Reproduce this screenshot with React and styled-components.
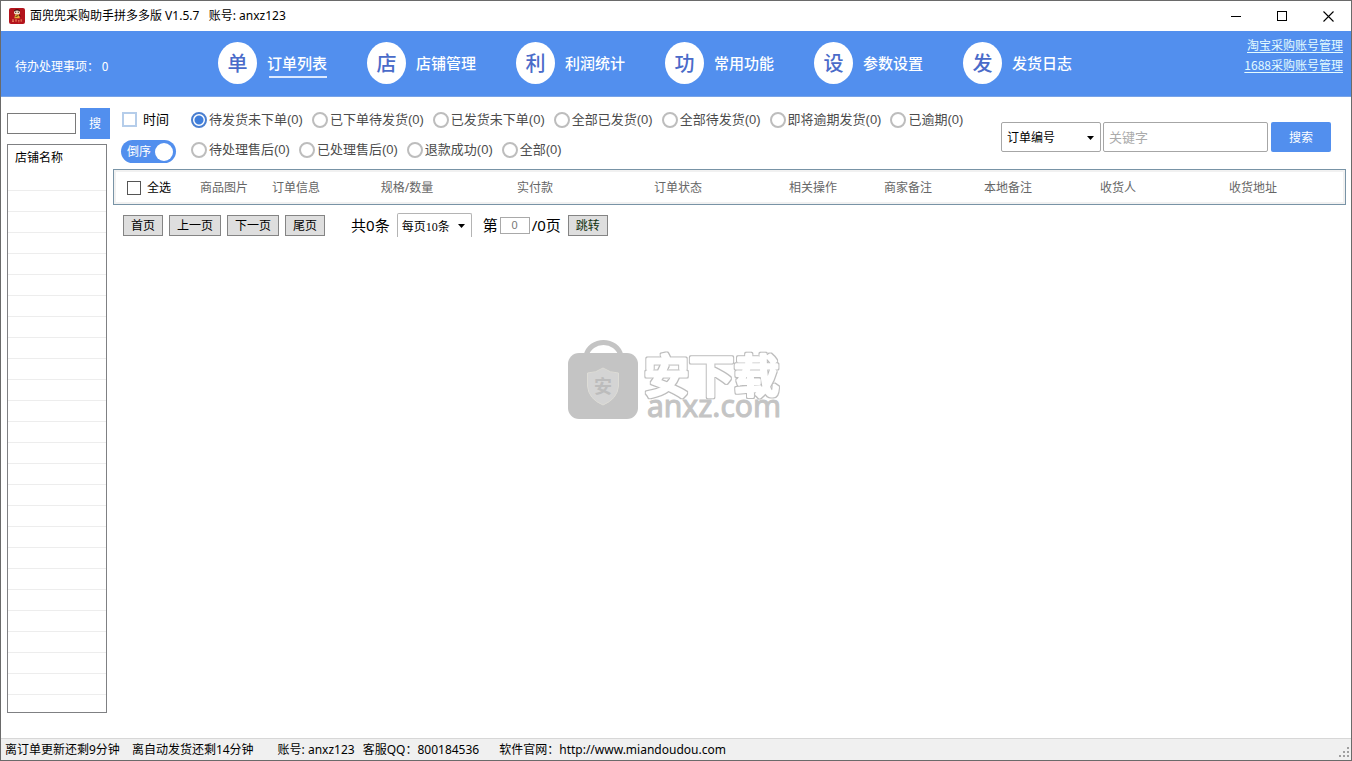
import React, { useState } from "react";
import styled, { createGlobalStyle } from "styled-components";

const blue = "#528fee";

const GlobalStyle = createGlobalStyle`
  * { box-sizing: border-box; }
  body {
    margin: 0;
    background: #fff;
    color: #000;
    font: 12px/16px "Noto Sans", "Noto Sans CJK SC", sans-serif;
  }
  button, input, select { font: inherit; color: inherit; margin: 0; }
`;

const Window = styled.div`
  position: relative;
  display: flex;
  flex-direction: column;
  min-height: 100vh;
  border: 1px solid #6a6a6a;
`;

const TitleBar = styled.header`
  display: flex;
  align-items: center;
  height: 30px;
  padding-left: 8px;
`;

const TitleText = styled.h1`
  margin: 0 auto 0 5px;
  font-size: 12px;
  font-weight: 400;
  white-space: pre;
`;

const WindowButton = styled.button`
  display: flex;
  align-items: center;
  justify-content: center;
  width: 46px;
  height: 30px;
  padding: 0;
  border: 0;
  background: none;
`;

const Banner = styled.div`
  display: flex;
  height: 66px;
  padding: 0 8px 0 14px;
  background: ${blue};
  border-bottom: 1px solid #78a4e8;
  color: #fff;
`;

const Todo = styled.div`
  width: 203px;
  padding-top: 27px;
  font-family: "Noto Sans CJK SC", sans-serif;
`;

const Nav = styled.nav`
  display: flex;
  gap: 40px;
  flex: 1;
  padding-top: 11px;
`;

const NavItem = styled.a`
  display: flex;
  align-items: center;
  gap: 10px;
  height: 42px;
  color: #fff;
  text-decoration: none;
  font: 500 15px/22px "Noto Sans CJK SC", sans-serif;
`;

const NavBadge = styled.span`
  width: 39px;
  height: 42px;
  border-radius: 50%;
  background: #fff;
  color: #4a6bc9;
  font-size: 20px;
  line-height: 42px;
  text-align: center;
`;

const NavLabel = styled.span`
  position: relative;
  white-space: nowrap;
  &::after {
    content: "";
    display: ${(p) => (p.$active ? "block" : "none")};
    position: absolute;
    left: 2px;
    right: 0;
    bottom: -4px;
    height: 2px;
    background: #dce9ff;
  }
`;

const AccountLinks = styled.div`
  display: flex;
  flex-direction: column;
  align-items: flex-end;
  padding-top: 4px;
  a {
    color: #e4fbff;
    font: 12px/20px "Noto Sans CJK SC", sans-serif;
    text-decoration: underline;
    text-underline-offset: 2px;
    white-space: nowrap;
  }
`;

const Body = styled.main`
  display: flex;
  flex: 1;
`;

const Sidebar = styled.aside`
  display: flex;
  flex-direction: column;
  flex: none;
  width: 106px;
  padding: 11px 0 25px 6px;
`;

const ShopSearch = styled.form`
  display: flex;
  align-items: center;
  gap: 4px;
  height: 31px;
  margin-right: -3px;
`;

const ShopInput = styled.input`
  width: 69px;
  height: 21px;
  border: 1px solid #7a7a7a;
`;

const ShopButton = styled.button`
  width: 30px;
  height: 31px;
  padding: 0;
  border: 0;
  background: ${blue};
  color: #fff;
`;

const ShopList = styled.div`
  flex: 1;
  margin-top: 5px;
  padding-bottom: 17px;
  border: 1px solid #7f8083;
`;

const ShopTable = styled.table`
  width: 100%;
  border-collapse: collapse;
  th {
    height: 45px;
    padding: 5px 0 0 7px;
    border-bottom: 1px solid #ededed;
    font-weight: 400;
    text-align: left;
    vertical-align: top;
  }
  td {
    height: 21px;
    padding: 0;
    border-bottom: 1px solid #ededed;
  }
`;

const Content = styled.section`
  flex: 1;
  min-width: 0;
  padding: 8px 5px 0 6px;
`;

const Toolbar = styled.div`
  display: flex;
  height: 64px;
  padding-left: 8px;
`;

const Switches = styled.div`
  display: flex;
  flex-direction: column;
  gap: 11px;
  width: 70px;
  padding-top: 4px;
`;

const TimeLabel = styled.label`
  display: flex;
  align-items: center;
  gap: 6px;
  height: 20px;
  padding-left: 1px;
  font-size: 13px;
`;

const Check = styled.input`
  appearance: none;
  width: ${(p) => p.$size}px;
  height: ${(p) => p.$size}px;
  border: ${(p) => p.$line};
  background: #fff;
  &:checked { background: ${blue}; }
`;

const Toggle = styled.label`
  display: flex;
  align-items: center;
  justify-content: space-between;
  width: 55px;
  height: 23px;
  padding: 0 3px 0 6px;
  border-radius: 12px;
  background: ${blue};
  color: #fff;
  input {
    appearance: none;
    width: 18px;
    height: 18px;
    border-radius: 50%;
    background: #fff;
  }
`;

const Filters = styled.div`
  display: flex;
  flex-direction: column;
  gap: 10px;
  flex: 1;
  padding-top: 5px;
`;

const FilterRow = styled.div`
  display: flex;
  gap: 9px;
`;

const FilterLabel = styled.label`
  display: flex;
  align-items: center;
  gap: 2px;
  height: 20px;
  color: #4c4c4c;
  font: 13px/20px "Liberation Sans", "Noto Sans CJK SC", sans-serif;
  white-space: nowrap;
`;

const Radio = styled.input`
  appearance: none;
  width: 16px;
  height: 16px;
  border: 2px solid #bdbdbd;
  border-radius: 50%;
  &:checked {
    border-color: #4a7fd0;
    background: radial-gradient(circle, #3f7edb 4px, #fff 5px);
  }
`;

const SearchForm = styled.form`
  display: flex;
  align-items: flex-start;
  padding: 17px 15px 0 0;
`;

const SelectWrap = styled.span`
  position: relative;
  display: inline-flex;
  margin-right: 2px;
  svg {
    position: absolute;
    top: 50%;
    right: 7px;
    margin-top: -1px;
    pointer-events: none;
  }
`;

const FieldSelect = styled.select`
  appearance: none;
  width: 100px;
  height: 30px;
  padding: 2px 5px 0;
  border: 1px solid #a6a6a6;
  border-radius: 2px;
  background: #fff;
`;

const KeywordInput = styled.input`
  width: 165px;
  height: 30px;
  margin-right: 3px;
  padding: 0 5px;
  border: 1px solid #a6a6a6;
  border-radius: 2px;
  font-size: 13px;
  &::placeholder { color: #ababab; }
`;

const SearchButton = styled.button`
  width: 60px;
  height: 30px;
  padding: 2px 0 0;
  border: 0;
  border-radius: 2px;
  background: ${blue};
  color: #fff;
`;

const OrderPanel = styled.div`
  padding: 0 17px 0 0;
  border: 1px solid #7893a6;
  box-shadow: inset 0 0 0 2px #f1f1f1;
`;

const OrderTable = styled.table`
  width: 100%;
  table-layout: fixed;
  border-collapse: collapse;
  th {
    height: 34px;
    padding: 2px 0 0;
    color: #666;
    font-weight: 400;
  }
`;

const SelectAll = styled.label`
  display: flex;
  align-items: center;
  gap: 6px;
  padding-left: 13px;
  color: #000;
`;

const Pager = styled.div`
  display: flex;
  align-items: center;
  height: 24px;
  margin-top: 8px;
  padding-left: 10px;
`;

const PagerButton = styled.button`
  height: 21px;
  margin-right: 6px;
  padding: 1px 7px 0;
  border: 1px solid #848484;
  background: #dedede;
  color: ${(p) => (p.$green ? "#12320f" : "#000")};
  line-height: 18px;
`;

const PagerText = styled.span`
  font-size: 15px;
  line-height: 20px;
  white-space: nowrap;
`;

const TotalText = styled(PagerText)`
  margin: 0 7px 0 20px;
`;

const PageJump = styled.label`
  display: flex;
  align-items: center;
  margin: 0 7px 0 9px;
`;

const PageSize = styled.select`
  appearance: none;
  width: 75px;
  height: 24px;
  padding: 3px 4px 0;
  border: 1px solid #b4b4b4;
  border-bottom: 0;
  border-radius: 2px 2px 0 0;
  background: #fff;
  font-family: "Liberation Serif", "Noto Sans CJK SC", serif;
`;

const PageInput = styled.input`
  width: 30px;
  height: 17px;
  margin: 0 2px;
  padding: 0;
  border: 1px solid #a9a9a9;
  color: #777;
  font: 11px/15px "Liberation Sans", sans-serif;
  text-align: center;
`;

const Watermark = styled.svg`
  position: absolute;
  inset: 0;
  margin: auto;
  pointer-events: none;
`;

const StatusBar = styled.footer`
  display: flex;
  align-items: center;
  height: 22px;
  padding: 0 2px 0 4px;
  border-top: 1px solid #d7d7d7;
  background: #f0f0f0;
  white-space: nowrap;
  svg { margin-left: auto; align-self: flex-end; margin-bottom: 3px; }
`;

const StatusItem = styled.span`
  margin-right: ${(p) => p.$gap}px;
`;

const navItems = [
  ["单", "订单列表"],
  ["店", "店铺管理"],
  ["利", "利润统计"],
  ["功", "常用功能"],
  ["设", "参数设置"],
  ["发", "发货日志"],
];

const filterRows = [
  ["待发货未下单", "已下单待发货", "已发货未下单", "全部已发货", "全部待发货", "即将逾期发货", "已逾期"],
  ["待处理售后", "已处理售后", "退款成功", "全部"],
];

const columns = [
  ["商品图片", 72],
  ["订单信息", 72],
  ["规格/数量", 150],
  ["实付款", 106],
  ["订单状态", 180],
  ["相关操作", 90],
  ["商家备注", 100],
  ["本地备注", 100],
  ["收货人", 120],
  ["收货地址", 150],
];

const shopRows = Array.from({ length: 24 }, (_, i) => i);

const Caret = () => (
  <svg width="7" height="4" viewBox="0 0 7 4" aria-hidden="true">
    <path d="M0 0h7L3.500 4z" fill="#000" />
  </svg>
);

const AppIcon = () => (
  <svg width="16" height="16" viewBox="0 0 16 16" aria-hidden="true">
    <rect width="16" height="16" rx="2" fill="#b3141d" />
    <path d="M5 4.800C4.400 2.400 6 1.300 8 1.300s3.600 1.100 3 3.500z" fill="#3a0d0c" />
    <ellipse cx="8" cy="4.400" rx="3" ry="2" fill="#f7e6d2" />
    <path d="M6 4.200h1.300M8.700 4.200H10" stroke="#30100c" strokeWidth="1" />
    <path d="M6.200 6.600h3.700l1 3.600H5.300z" fill="#e6b23c" />
    <path d="M6.500 8.600 9.400 7.500M10 7l1.600 1.200" stroke="#3a1a0c" strokeWidth=".9" />
    <path d="M3 12h2M3 13.500h2M4 11.500V14M6 12h2M7 11.500V14M9 12.500h1.500M9 13.800h1.500M11.500 12H13M12.200 11.500V14" stroke="#ef8a62" strokeWidth=".7" />
  </svg>
);

export default function App() {
  const [filter, setFilter] = useState("待发货未下单");

  return (
    <>
      <GlobalStyle />
      <Window>
        <TitleBar>
          <AppIcon />
          <TitleText>{"面兜兜采购助手拼多多版 V1.5.7   账号: anxz123"}</TitleText>
          <WindowButton aria-label="最小化">
            <svg width="10" height="10"><path d="M0 5.500h10" stroke="#000" /></svg>
          </WindowButton>
          <WindowButton aria-label="最大化">
            <svg width="10" height="10"><rect x=".5" y=".5" width="9" height="9" fill="none" stroke="#000" /></svg>
          </WindowButton>
          <WindowButton aria-label="关闭">
            <svg width="11" height="11"><path d="M.5.5l10 10M10.500.5l-10 10" stroke="#000" strokeWidth="1.100" /></svg>
          </WindowButton>
        </TitleBar>

        <Banner>
          <Todo>待办处理事项： 0</Todo>
          <Nav>
            {navItems.map(([badge, label], i) => (
              <NavItem key={label} href="#">
                <NavBadge>{badge}</NavBadge>
                <NavLabel $active={i === 0}>{label}</NavLabel>
              </NavItem>
            ))}
          </Nav>
          <AccountLinks>
            <a href="#">淘宝采购账号管理</a>
            <a href="#">1688采购账号管理</a>
          </AccountLinks>
        </Banner>

        <Body>
          <Sidebar>
            <ShopSearch>
              <ShopInput aria-label="店铺名称" />
              <ShopButton type="button">搜</ShopButton>
            </ShopSearch>
            <ShopList>
              <ShopTable>
                <thead><tr><th>店铺名称</th></tr></thead>
                <tbody>
                  {shopRows.map((row) => <tr key={row}><td /></tr>)}
                </tbody>
              </ShopTable>
            </ShopList>
          </Sidebar>

          <Content>
            <Toolbar>
              <Switches>
                <TimeLabel>
                  <Check type="checkbox" $size={15} $line="2px solid #b5cdea" />
                  时间
                </TimeLabel>
                <Toggle>
                  倒序
                  <input type="checkbox" role="switch" defaultChecked />
                </Toggle>
              </Switches>
              <Filters>
                {filterRows.map((row, i) => (
                  <FilterRow key={i}>
                    {row.map((name) => (
                      <FilterLabel key={name}>
                        <Radio
                          type="radio"
                          name="status"
                          checked={filter === name}
                          onChange={() => setFilter(name)}
                        />
                        {name}(0)
                      </FilterLabel>
                    ))}
                  </FilterRow>
                ))}
              </Filters>
              <SearchForm>
                <SelectWrap>
                  <FieldSelect aria-label="搜索字段"><option>订单编号</option></FieldSelect>
                  <Caret />
                </SelectWrap>
                <KeywordInput aria-label="关键字" placeholder="关键字" />
                <SearchButton type="button">搜索</SearchButton>
              </SearchForm>
            </Toolbar>

            <OrderPanel>
              <OrderTable>
                <colgroup>
                  <col width="74" />
                  {columns.map(([name, width]) => <col key={name} width={width} />)}
                </colgroup>
                <thead>
                  <tr>
                    <th>
                      <SelectAll>
                        <Check type="checkbox" $size={14} $line="1px solid #555" />
                        全选
                      </SelectAll>
                    </th>
                    {columns.map(([name]) => <th key={name}>{name}</th>)}
                  </tr>
                </thead>
              </OrderTable>
            </OrderPanel>

            <Pager>
              <PagerButton>首页</PagerButton>
              <PagerButton>上一页</PagerButton>
              <PagerButton>下一页</PagerButton>
              <PagerButton>尾页</PagerButton>
              <TotalText>共0条</TotalText>
              <SelectWrap>
                <PageSize aria-label="每页条数"><option>每页10条</option></PageSize>
                <Caret />
              </SelectWrap>
              <PageJump>
                <PagerText>第</PagerText>
                <PageInput aria-label="页码" defaultValue="0" />
                <PagerText>/0页</PagerText>
              </PageJump>
              <PagerButton $green>跳转</PagerButton>
            </Pager>
          </Content>
        </Body>

        <StatusBar>
          <StatusItem $gap={12}>离订单更新还剩9分钟</StatusItem>
          <StatusItem $gap={24}>离自动发货还剩14分钟</StatusItem>
          <StatusItem $gap={8}>账号: anxz123</StatusItem>
          <StatusItem $gap={20}>客服QQ：800184536</StatusItem>
          <StatusItem $gap={0}>软件官网：http://www.miandoudou.com</StatusItem>
          <svg width="10" height="10" fill="#a0a0a0" aria-hidden="true">
            <path d="M8 0h2v2H8zM4 4h2v2H4zM8 4h2v2H8zM0 8h2v2H0zM4 8h2v2H4zM8 8h2v2H8z" />
          </svg>
        </StatusBar>

        <Watermark width="216" height="92" viewBox="0 -4 216 92" role="img" aria-label="安下载 anxz.com">
          <defs>
            <filter id="outline" x="-5%" y="-10%" width="110%" height="120%" colorInterpolationFilters="sRGB">
              <feMorphology in="SourceAlpha" operator="dilate" radius="1" result="grown" />
              <feFlood floodColor="#bdbdbd" />
              <feComposite in2="grown" operator="in" result="edge" />
              <feMerge>
                <feMergeNode in="edge" />
                <feMergeNode in="SourceGraphic" />
              </feMerge>
            </filter>
          </defs>
          <path d="M18 17C22-1 49-1 53 17" fill="none" stroke="#c4c4c4" strokeWidth="5" />
          <rect x="0" y="14" width="70" height="66" rx="11" fill="#c4c4c4" />
          <path d="M35 29q7 5 15.500 5v13q-1 13-15.500 19-14.500-6-15.500-19V34q8.500 0 15.500-5z" fill="#d4d4d4" stroke="#dddcd6" />
          <text x="26" y="54" fontSize="18" fontWeight="700" fill="#bcbcbc" fontFamily="Noto Sans CJK SC">安</text>
          <text
            x="76" y="54" fontSize="45" fontWeight="500" fill="#fff" stroke="#fff" strokeWidth="3"
            strokeLinejoin="round" filter="url(#outline)" fontFamily="Noto Sans CJK SC"
          >安下载</text>
          <text x="79" y="78" fontSize="30" fill="#c4c4c4" stroke="#c4c4c4" strokeWidth="1" fontFamily="Noto Sans">anxz.com</text>
        </Watermark>
      </Window>
    </>
  );
}
